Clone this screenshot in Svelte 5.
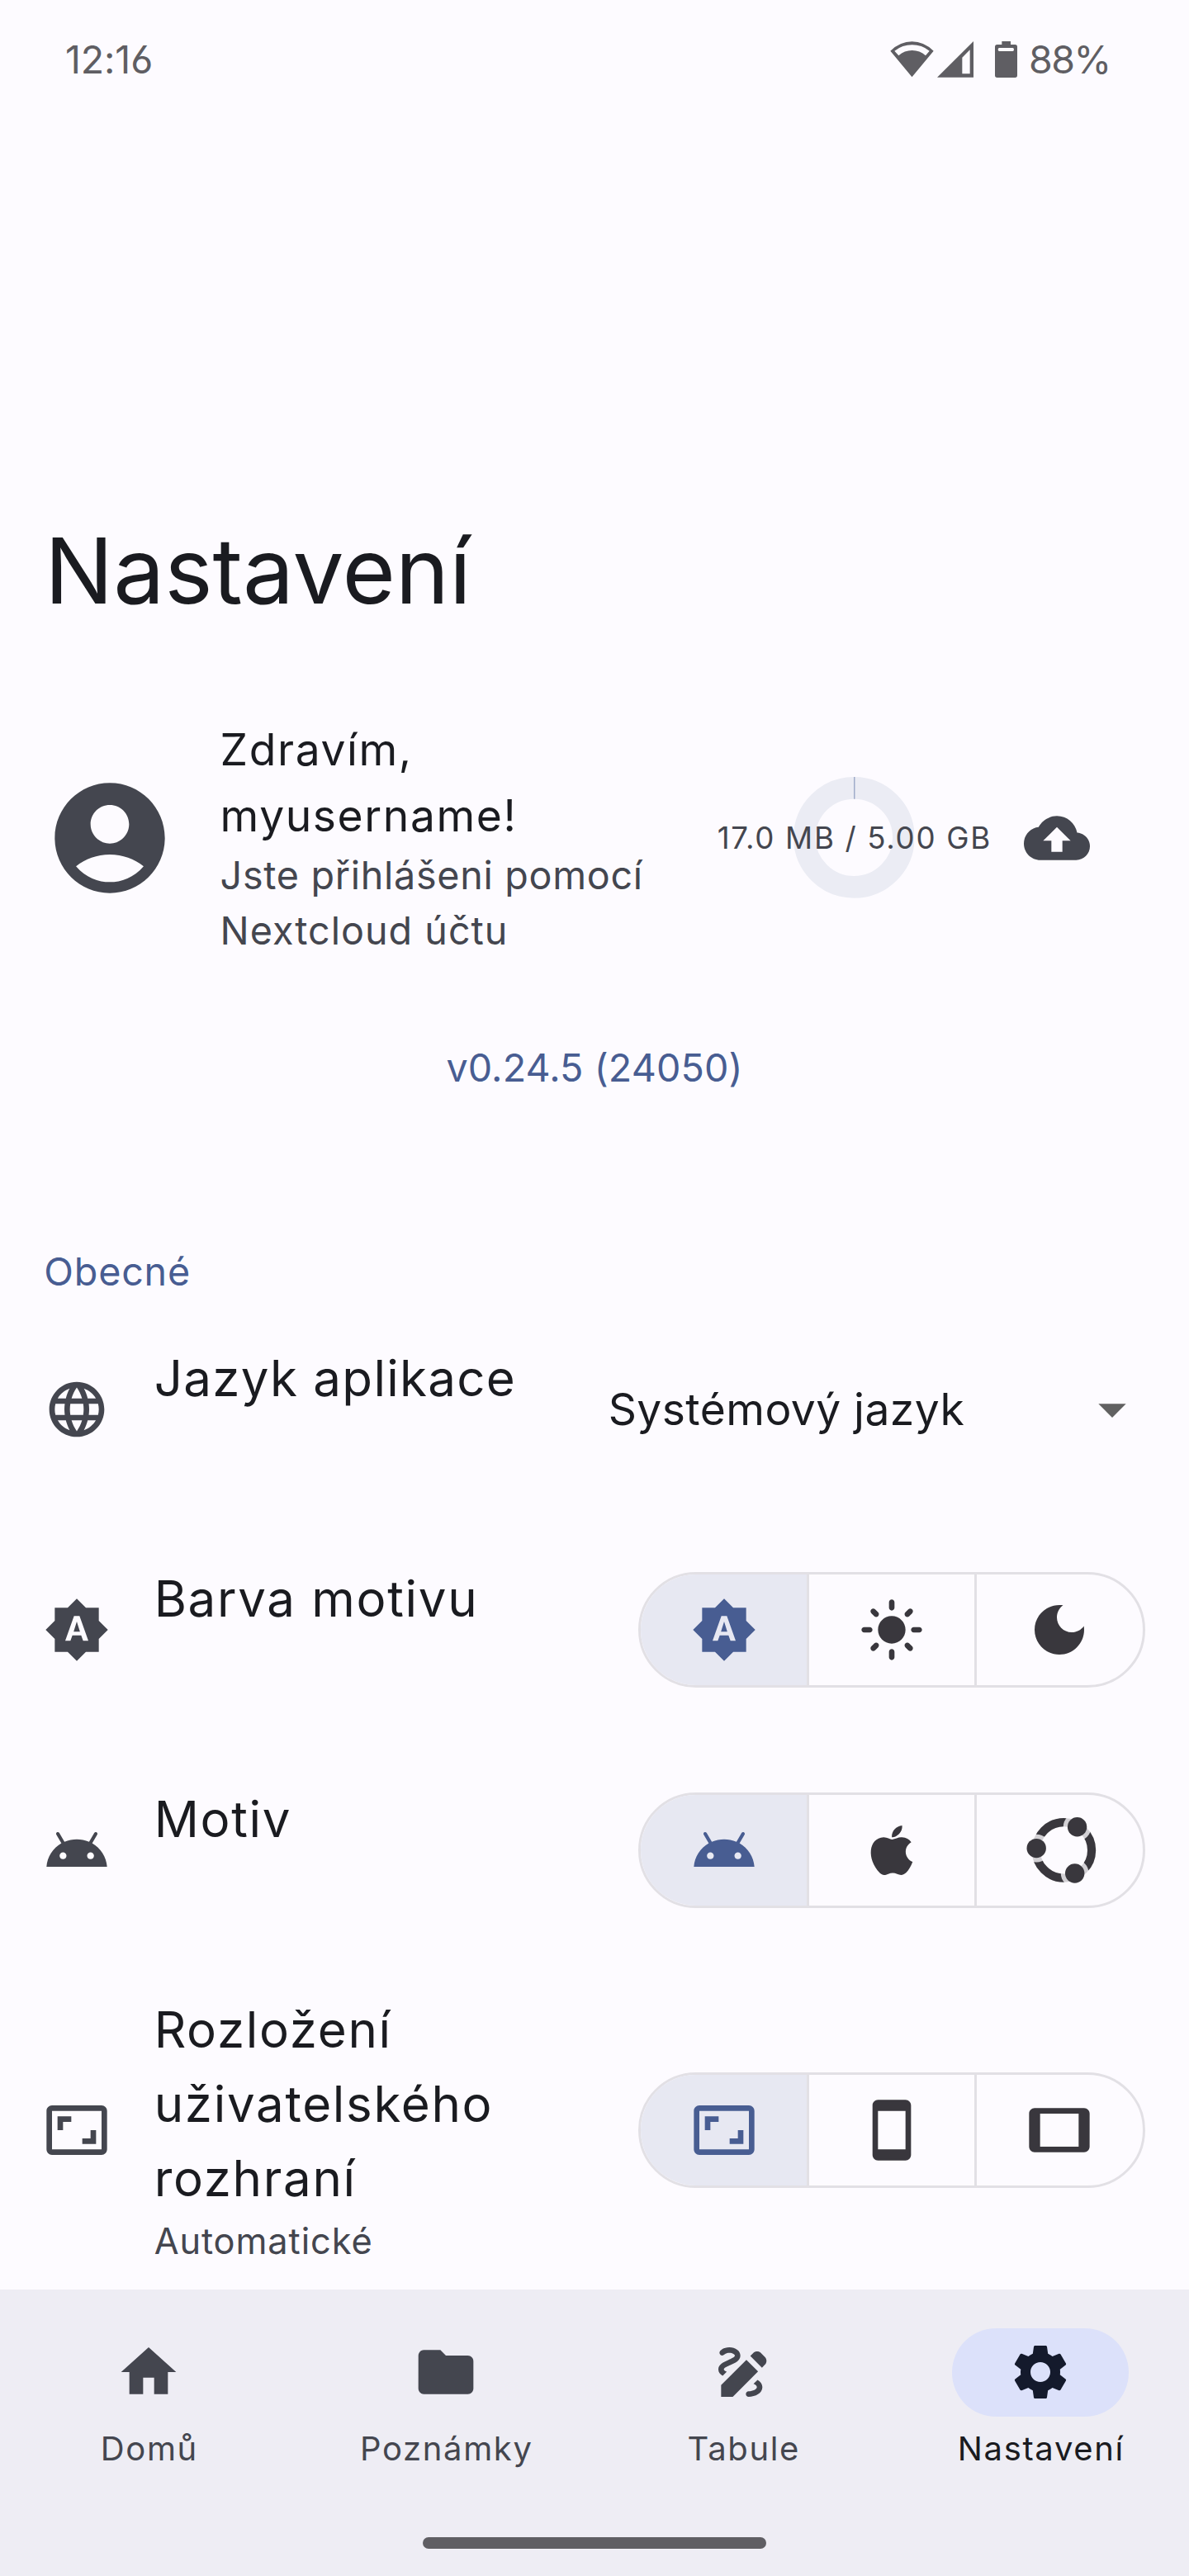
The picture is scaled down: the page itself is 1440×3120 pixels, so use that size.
<script>
  const icons = {
    account: 'M12 2C6.48 2 2 6.48 2 12s4.48 10 10 10 10-4.48 10-10S17.52 2 12 2zm0 4c1.93 0 3.5 1.57 3.5 3.5S13.93 13 12 13s-3.5-1.57-3.5-3.5S10.07 6 12 6zm0 14c-2.03 0-4.43-.82-6.14-2.88C7.55 15.8 9.68 15 12 15s4.45.8 6.14 2.12C16.43 19.18 14.03 20 12 20z',
    backup: 'M19.35 10.04C18.67 6.59 15.64 4 12 4 9.11 4 6.6 5.64 5.35 8.04 2.34 8.36 0 10.91 0 14c0 3.31 2.69 6 6 6h13c2.76 0 5-2.24 5-5 0-2.64-2.05-4.78-4.65-4.96zM14 13v4h-4v-4H7l5-5 5 5h-3z',
    language: 'M11.99 2C6.47 2 2 6.48 2 12s4.47 10 9.99 10C17.52 22 22 17.52 22 12S17.52 2 11.99 2zm6.93 6h-2.95c-.32-1.25-.78-2.45-1.38-3.56 1.84.63 3.37 1.91 4.33 3.56zM12 4.04c.83 1.2 1.48 2.53 1.91 3.96h-3.82c.43-1.43 1.08-2.76 1.91-3.96zM4.26 14C4.1 13.36 4 12.69 4 12s.1-1.36.26-2h3.38c-.08.66-.14 1.32-.14 2s.06 1.34.14 2H4.26zm.82 2h2.95c.32 1.25.78 2.45 1.38 3.56-1.84-.63-3.37-1.9-4.33-3.56zm2.95-8H5.08c.96-1.66 2.49-2.93 4.33-3.56C8.81 5.55 8.35 6.75 8.03 8zM12 19.96c-.83-1.2-1.48-2.53-1.91-3.96h3.82c-.43 1.43-1.08 2.76-1.91 3.96zM14.34 14H9.66c-.09-.66-.16-1.32-.16-2s.07-1.35.16-2h4.68c.09.65.16 1.32.16 2s-.07 1.34-.16 2zm.25 5.56c.6-1.11 1.06-2.31 1.38-3.56h2.95c-.96 1.65-2.49 2.93-4.33 3.56zM16.36 14c.08-.66.14-1.32.14-2s-.06-1.34-.14-2h3.38c.16.64.26 1.31.26 2s-.1 1.36-.26 2h-3.38z',
    auto: 'M10.85 12.65h2.3L12 9l-1.15 3.65zM20 8.69V4h-4.69L12 .69 8.69 4H4v4.69L.69 12 4 15.31V20h4.69L12 23.31 15.31 20H20v-4.69L23.31 12 20 8.69zM14.3 16l-.7-2h-3.2l-.7 2H7.8L11 7h2l3.2 9h-1.9z',
    light: 'M12 7c-2.76 0-5 2.24-5 5s2.24 5 5 5 5-2.24 5-5-2.24-5-5-5zM2 13h2c.55 0 1-.45 1-1s-.45-1-1-1H2c-.55 0-1 .45-1 1s.45 1 1 1zm18 0h2c.55 0 1-.45 1-1s-.45-1-1-1h-2c-.55 0-1 .45-1 1s.45 1 1 1zM11 2v2c0 .55.45 1 1 1s1-.45 1-1V2c0-.55-.45-1-1-1s-1 .45-1 1zm0 18v2c0 .55.45 1 1 1s1-.45 1-1v-2c0-.55-.45-1-1-1s-1 .45-1 1zM5.99 4.58c-.39-.39-1.03-.39-1.41 0-.39.39-.39 1.03 0 1.41l1.06 1.06c.39.39 1.03.39 1.41 0s.39-1.03 0-1.41L5.99 4.58zm12.37 12.37c-.39-.39-1.03-.39-1.41 0-.39.39-.39 1.03 0 1.41l1.06 1.06c.39.39 1.03.39 1.41 0 .39-.39.39-1.03 0-1.41l-1.06-1.06zm1.06-10.96c.39-.39.39-1.03 0-1.41-.39-.39-1.03-.39-1.41 0l-1.06 1.06c-.39.39-.39 1.03 0 1.41s1.03.39 1.41 0l1.06-1.06zM7.05 18.36c.39-.39.39-1.03 0-1.41-.39-.39-1.03-.39-1.41 0l-1.06 1.06c-.39.39-.39 1.03 0 1.41s1.03.39 1.41 0l1.06-1.06z',
    dark: 'M12 3c-4.97 0-9 4.03-9 9s4.03 9 9 9 9-4.03 9-9c0-.46-.04-.92-.1-1.36-.98 1.37-2.58 2.26-4.4 2.26-2.98 0-5.4-2.42-5.4-5.4 0-1.81.89-3.42 2.26-4.4C12.92 3.04 12.46 3 12 3z',
    android: 'M17.6 9.48l1.84-3.18c.16-.31.04-.69-.26-.85-.29-.15-.65-.06-.83.22l-1.88 3.24c-2.86-1.21-6.08-1.21-8.94 0L5.65 5.67c-.19-.29-.58-.38-.87-.2-.28.18-.37.54-.22.83L6.4 9.48C3.3 11.25 1.28 14.44 1 18h22c-.28-3.56-2.3-6.75-5.4-8.52zM7 15.25c-.69 0-1.25-.56-1.25-1.25S6.31 12.75 7 12.75 8.25 13.31 8.25 14 7.69 15.25 7 15.25zm10 0c-.69 0-1.25-.56-1.25-1.25s.56-1.25 1.25-1.25 1.25.56 1.25 1.25-.56 1.25-1.25 1.25z',
    apple: 'M17.05 20.28c-.98.95-2.05.8-3.08.35-1.09-.46-2.09-.48-3.24 0-1.44.62-2.2.44-3.06-.35C2.79 15.25 3.51 7.59 9.05 7.31c1.35.07 2.29.74 3.08.8 1.18-.24 2.31-.93 3.57-.84 1.51.12 2.65.72 3.4 1.8-3.12 1.87-2.38 5.98.48 7.13-.57 1.5-1.31 2.98-2.54 4.09l.01-.01zM12.03 7.25c-.15-2.23 1.66-4.07 3.74-4.25.29 2.58-2.34 4.5-3.74 4.25z',
    ratio: 'M19 12h-2v3h-3v2h5v-5zM7 9h3V7H5v5h2V9zm14-6H3c-1.1 0-2 .9-2 2v14c0 1.1.9 2 2 2h18c1.1 0 2-.9 2-2V5c0-1.1-.9-2-2-2zm0 16.01H3V4.99h18v14.02z',
    phone: 'M17 1.01L7 1c-1.1 0-1.99.9-1.99 2v18c0 1.1.89 2 1.99 2h10c1.1 0 2-.9 2-2V3c0-1.1-.9-1.99-2-1.99zM17 19H7V5h10v14z',
    tablet: 'M21 4H3c-1.1 0-2 .9-2 2v12c0 1.1.9 2 2 2h18c1.1 0 1.99-.9 1.99-2L23 6c0-1.1-.9-2-2-2zm-2 14H5V6h14v12z',
    home: 'M10 20v-6h4v6h5v-8h3L12 3 2 12h3v8z',
    folder: 'M10 4H4c-1.1 0-1.99.9-1.99 2L2 18c0 1.1.9 2 2 2h16c1.1 0 2-.9 2-2V8c0-1.1-.9-2-2-2h-8l-2-2z',
    draw: 'M18.85 10.39l1.06-1.06c.78-.78.78-2.05 0-2.83L18.5 5.09c-.78-.78-2.05-.78-2.83 0l-1.06 1.06 4.24 4.24zm-5.66-2.83L4 16.76V21h4.24l9.19-9.19-4.24-4.25zM19 17.5c0 2.19-2.54 3.5-5 3.5-.55 0-1-.45-1-1s.45-1 1-1c1.54 0 3-.73 3-1.5 0-.47-.48-.87-1.23-1.2l1.48-1.48c1.07.63 1.75 1.47 1.75 2.68zM4.58 13.35C3.61 12.79 3 12.06 3 11c0-1.8 1.89-2.63 3.56-3.36C7.59 7.18 9 6.56 9 6c0-.41-.78-1-2-1-1.26 0-1.8.61-1.83.64-.35.41-.98.46-1.4.12-.41-.34-.49-.95-.15-1.38C3.73 4.24 4.76 3 7 3s4 1.32 4 3c0 1.87-1.93 2.72-3.64 3.47C6.42 9.88 5 10.5 5 11c0 .31.43.6 1.07.86l-1.49 1.49z',
    settings: 'M19.14 12.94c.04-.3.06-.61.06-.94 0-.32-.02-.64-.07-.94l2.03-1.58c.18-.14.23-.41.12-.61l-1.92-3.32c-.12-.22-.37-.29-.59-.22l-2.39.96c-.5-.38-1.03-.7-1.62-.94l-.36-2.54c-.04-.24-.24-.41-.48-.41h-3.84c-.24 0-.43.17-.47.41l-.36 2.54c-.59.24-1.13.57-1.62.94l-2.39-.96c-.22-.08-.47 0-.59.22L2.74 8.87c-.12.21-.08.47.12.61l2.03 1.58c-.05.3-.09.63-.09.94s.02.64.07.94l-2.03 1.58c-.18.14-.23.41-.12.61l1.92 3.32c.12.22.37.29.59.22l2.39-.96c.5.38 1.03.7 1.62.94l.36 2.54c.05.24.24.41.48.41h3.84c.24 0 .44-.17.47-.41l.36-2.54c.59-.24 1.13-.56 1.62-.94l2.39.96c.22.08.47 0 .59-.22l1.92-3.32c.12-.22.07-.47-.12-.61l-2.01-1.58zM12 15.6c-1.98 0-3.6-1.62-3.6-3.6s1.62-3.6 3.6-3.6 3.6 1.62 3.6 3.6-1.62 3.6-3.6 3.6z',
    dropdown: 'M7 10l5 5 5-5z'
  };

  const settings = [
    { icon: 'language', title: ['Jazyk aplikace'], select: 'Systémový jazyk' },
    { icon: 'auto', title: ['Barva motivu'], options: ['auto', 'light', 'dark'] },
    { icon: 'android', title: ['Motiv'], options: ['android', 'apple', 'ubuntu'] },
    {
      icon: 'ratio',
      title: ['Rozložení', 'uživatelského', 'rozhraní'],
      note: 'Automatické',
      options: ['ratio', 'phone', 'tablet']
    }
  ];

  const tabs = [
    { icon: 'home', label: 'Domů' },
    { icon: 'folder', label: 'Poznámky' },
    { icon: 'draw', label: 'Tabule' },
    { icon: 'settings', label: 'Nastavení', active: true }
  ];
</script>

{#snippet icon(name)}
  {#if name === 'ubuntu'}
    <svg class="icon" viewBox="0 0 80 80">
      <mask id="ring-gaps" maskUnits="userSpaceOnUse" x="-10" y="-10" width="100" height="100">
        <rect x="-10" y="-10" width="100" height="100" fill="#fff" />
        <circle cx="12.2" cy="37.6" r="16.9" />
        <circle cx="61.6" cy="11.7" r="16.9" />
        <circle cx="58.7" cy="68" r="16.9" />
      </mask>
      <circle class="ring" cx="45.4" cy="39.9" r="33.7" mask="url(#ring-gaps)" />
      <circle cx="12.2" cy="37.6" r="11.7" />
      <circle cx="61.6" cy="11.7" r="11.7" />
      <circle cx="58.7" cy="68" r="11.7" />
    </svg>
  {:else}
    <svg class="icon" viewBox="0 0 24 24"><path d={icons[name]} /></svg>
  {/if}
{/snippet}

<div class="screen">
  <header class="status">
    <span class="clock">12:16</span>
    <div class="indicators">
      <svg class="wifi" viewBox="51 62 159 131">
        <path fill-rule="evenodd" d="M130.500 192L52 97Q88 63 130.500 63T209 97ZM67 97L82 114Q103 95 131 95T180 114L194 97Q166 75 131 75T67 97Z" />
      </svg>
      <svg class="signal" viewBox="224 63 132 131">
        <path fill-rule="evenodd" d="M224 194L356 63V194ZM315 122V181H343V94Z" />
      </svg>
      <svg class="battery" viewBox="432 60 81 132">
        <path fill-rule="evenodd" d="M457 60H489V72H505Q513 72 513 80V184Q513 192 505 192H440Q432 192 432 184V80Q432 72 440 72H457ZM448 84Q443 84 443 90T448 96H496Q501 96 501 90T496 84Z" />
      </svg>
      <span class="charge">88%</span>
    </div>
  </header>

  <main>
    <h1>Nastavení</h1>

    <section class="profile">
      <div class="avatar">{@render icon('account')}</div>
      <div class="who">
        <div class="hello"><div>Zdravím,</div><div>myusername!</div></div>
        <div class="login"><div class="first">Jste přihlášeni pomocí</div><div>Nextcloud účtu</div></div>
      </div>
      <div class="quota">
        <svg viewBox="0 0 146.667 146.667">
          <circle class="track" cx="73.333" cy="73.333" r="60" />
          <path class="used" d="M73.800 0V26.700" />
        </svg>
        <span>17.0 MB / 5.00 GB</span>
      </div>
      {@render icon('backup')}
    </section>

    <div class="version">v0.24.5 (24050)</div>

    <h2>Obecné</h2>
    {#each settings as row}
      <div class="row" class:tall={row.note}>
        {@render icon(row.icon)}
        <div class="label">
          {#each row.title as line}<div class="name" class:lang={row.select}>{line}</div>{/each}
          {#if row.note}<div class="note">{row.note}</div>{/if}
        </div>
        {#if row.select}
          <div class="select"><span>{row.select}</span>{@render icon('dropdown')}</div>
        {:else}
          <div class="segments">
            {#each row.options as option, i}
              <div class="segment" class:chosen={i === 0}>{@render icon(option)}</div>
            {/each}
          </div>
        {/if}
      </div>
    {/each}
  </main>

  <nav>
    <div class="tabs">
      {#each tabs as tab}
        <div class="tab" class:active={tab.active}>
          <div class="pill">{@render icon(tab.icon)}</div>
          <span>{tab.label}</span>
        </div>
      {/each}
    </div>
    <div class="handle"></div>
  </nav>
</div>

<style>
  :global(body) {
    background: #fdfbff;
  }
  .screen {
    width: 1440px;
    height: 3120px;
    display: flex;
    flex-direction: column;
    overflow: hidden;
    background: #fdfbff;
    color: #1a1b20;
    font-family: Inter, "Liberation Sans", sans-serif;
    font-weight: 400;
  }
  .icon {
    display: block;
    flex: none;
    width: 80px;
    height: 80px;
    fill: currentColor;
    overflow: visible;
  }
  .ring {
    fill: none;
    stroke: currentColor;
    stroke-width: 10.2;
  }

  .status {
    flex: none;
    height: 144px;
    padding: 0 98px 0 79px;
    display: flex;
    align-items: center;
    justify-content: space-between;
    color: #5f5e63;
    fill: #5f5e63;
    font-size: 46.500px;
    font-feature-settings: "cv03";
  }
  .clock {
    letter-spacing: -0.100px;
  }
  .indicators {
    display: flex;
    align-items: center;
  }
  .indicators svg {
    display: block;
  }
  .wifi {
    width: 53px;
    height: 43.700px;
  }
  .signal {
    width: 44px;
    height: 43.700px;
    margin-left: 4.500px;
  }
  .battery {
    width: 27px;
    height: 44px;
    margin-left: 25.500px;
  }
  .charge {
    width: 96px;
    margin-left: 14.500px;
    letter-spacing: -1.500px;
    white-space: nowrap;
  }

  main {
    flex: 1;
    min-height: 0;
    overflow: hidden;
    padding-top: 479.500px;
  }
  h1 {
    margin: 0;
    padding-left: 54px;
    font-size: 110.600px;
    line-height: 134px;
    font-weight: 400;
    letter-spacing: -0.100px;
  }

  .profile {
    display: flex;
    align-items: center;
    height: 293.300px;
    margin-top: 110.500px;
    padding-left: 53.300px;
    color: #44464f;
  }
  .avatar .icon {
    width: 160px;
    height: 160px;
  }
  .who {
    width: 640.700px;
    margin-left: 53.300px;
  }
  .hello {
    color: #1a1b20;
    font-size: 53.333px;
    line-height: 80px;
    letter-spacing: 1.600px;
  }
  .login {
    margin-top: -1px;
    font-size: 46.667px;
    line-height: 66.667px;
    letter-spacing: 1px;
  }
  .first {
    letter-spacing: 0.700px;
  }
  .quota {
    position: relative;
    display: flex;
    align-items: center;
    justify-content: center;
    width: 146.667px;
    height: 146.667px;
    margin: 0 132.700px 0 53.300px;
  }
  .quota svg {
    display: block;
    width: 100%;
    height: 100%;
  }
  .track {
    fill: none;
    stroke: #ebecf4;
    stroke-width: 26.667;
  }
  .used {
    stroke: #8e9cc0;
    stroke-width: 1.200;
  }
  .quota span {
    position: absolute;
    padding-left: 1.660px;
    white-space: nowrap;
    font-size: 36.667px;
    letter-spacing: 1.660px;
  }

  .version {
    margin-top: 99px;
    text-align: center;
    color: #485d92;
    font-size: 46.667px;
    line-height: 66.667px;
    letter-spacing: 0.100px;
  }
  h2 {
    margin: 180.300px 0 0;
    padding-left: 53.300px;
    color: #485d92;
    font-size: 46.667px;
    line-height: 66.667px;
    font-weight: 400;
    letter-spacing: 0.800px;
  }

  .row {
    display: flex;
    align-items: center;
    height: 266.667px;
    padding: 0 53.333px;
    color: #44464f;
  }
  .tall {
    height: 412.600px;
  }
  .label {
    flex: 1;
    min-height: 166px;
    margin-left: 53.333px;
  }
  .name {
    color: #1a1b20;
    font-size: 60px;
    line-height: 90px;
    letter-spacing: 1.700px;
    white-space: nowrap;
  }
  .lang {
    letter-spacing: 1.300px;
  }
  .note {
    margin-top: -1px;
    font-size: 43.333px;
    line-height: 65px;
    letter-spacing: 0.900px;
  }
  .select {
    display: flex;
    align-items: center;
    justify-content: space-between;
    width: 650px;
    color: #616161;
  }
  .select span {
    color: #1a1b20;
    font-size: 53.333px;
    line-height: 80px;
    letter-spacing: 0.450px;
  }
  .segments {
    box-sizing: border-box;
    display: flex;
    width: 613.333px;
    height: 140px;
    overflow: hidden;
    border: 3px solid #e2e0e5;
    border-radius: 70px;
    color: #39373d;
  }
  .segment {
    flex: 1;
    display: flex;
    align-items: center;
    justify-content: center;
  }
  .segment + .segment {
    border-left: 3px solid #e2e0e5;
  }
  .chosen {
    background: #e7e8f2;
    color: #485d92;
  }

  nav {
    flex: none;
    height: 347px;
    display: flex;
    flex-direction: column;
    justify-content: space-between;
    background: #eeedf4;
  }
  .tabs {
    display: grid;
    grid-template-columns: repeat(4, 1fr);
    padding-top: 47px;
  }
  .tab {
    display: flex;
    flex-direction: column;
    align-items: center;
    gap: 12px;
    color: #44464f;
    font-size: 40px;
    line-height: 53.333px;
    letter-spacing: 1.650px;
  }
  .tab span {
    padding-left: 1.650px;
  }
  .pill {
    display: flex;
    align-items: center;
    justify-content: center;
    width: 213.333px;
    height: 106.667px;
    border-radius: 53.333px;
  }
  .active {
    color: #1a1b20;
  }
  .active .pill {
    background: #dce1fa;
    color: #141a2c;
  }
  .handle {
    width: 416px;
    height: 13.333px;
    margin: 0 auto 33.333px;
    border-radius: 7px;
    background: #5f5e63;
  }
</style>
